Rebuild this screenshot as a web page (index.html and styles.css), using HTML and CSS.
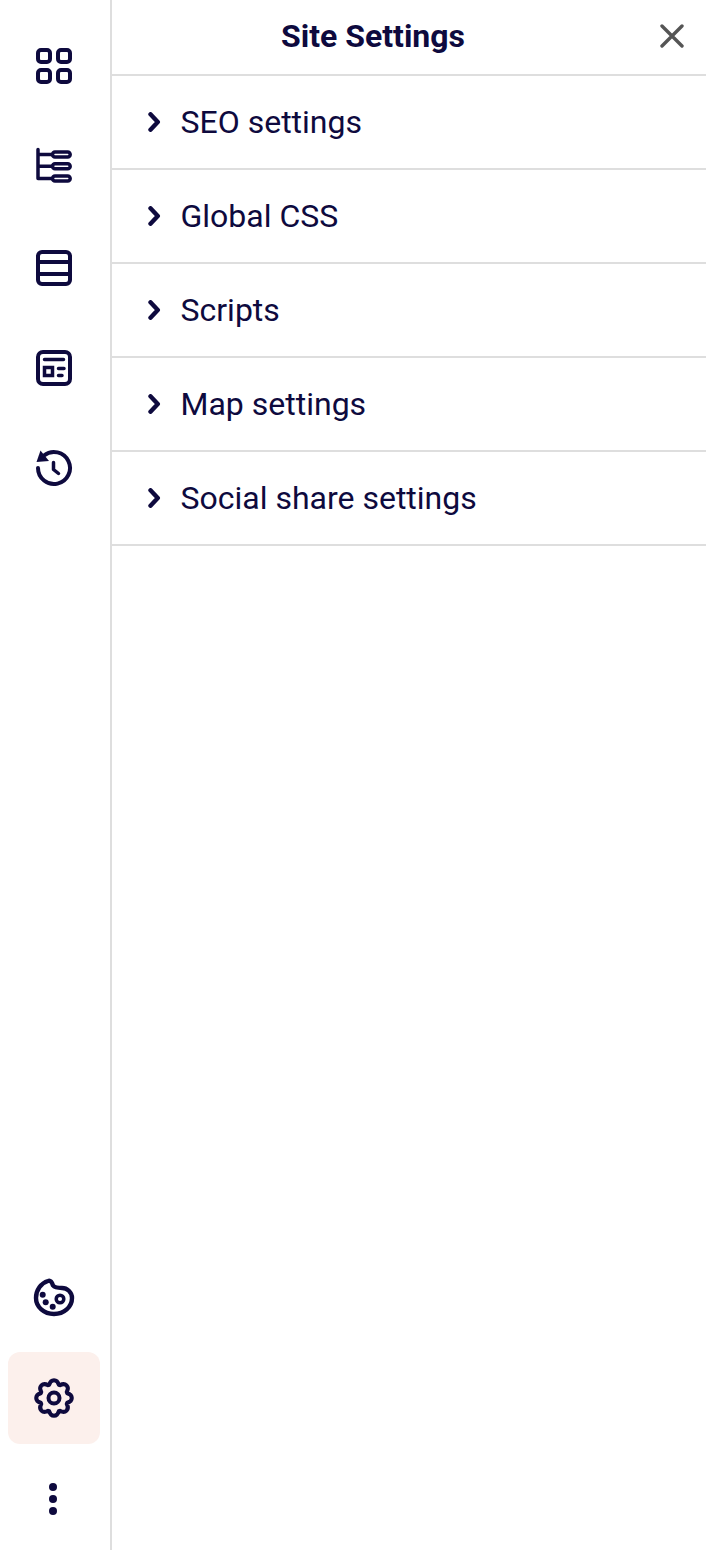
FILE: index.html
```html
<!DOCTYPE html>
<html lang="en">
<head>
<meta charset="utf-8">
<title>Site Settings</title>
<link rel="stylesheet" href="styles.css">
</head>
<body>
<div class="app">
  <nav class="rail">
    <div class="rail-group">
      <button class="rail-btn" aria-label="Elements">
        <svg class="icon" viewBox="0 0 36 36"><rect x="2" y="2" width="12" height="12" rx="3"/><rect x="22" y="2" width="12" height="12" rx="3"/><rect x="2" y="22" width="12" height="12" rx="3"/><rect x="22" y="22" width="12" height="12" rx="3"/></svg>
      </button>
      <button class="rail-btn" aria-label="Tree">
        <svg class="icon" viewBox="0 0 36 36"><path class="mid" d="M2 1.500v29h14M2 6.500h14M2 18.200h14"/><rect class="mid" x="16.500" y="4" width="17.700" height="5" rx="2.500"/><rect class="mid" x="16.500" y="15.700" width="17.700" height="5" rx="2.500"/><rect class="mid" x="16.500" y="28" width="17.700" height="5" rx="2.500"/></svg>
      </button>
      <button class="rail-btn shift" aria-label="Sections">
        <svg class="icon" viewBox="0 0 36 36"><rect x="2" y="2" width="32" height="32" rx="4"/><path d="M2 12h32M2 24h32"/></svg>
      </button>
      <button class="rail-btn" aria-label="Pages">
        <svg class="icon" viewBox="0 0 36 36"><rect x="2" y="2" width="32" height="32" rx="5"/><path class="mid" d="M8.500 9.500h19M22.500 18.500h5.500M22.500 25.500h3.500"/><rect class="thin" x="8.500" y="17.500" width="8" height="8"/></svg>
      </button>
      <button class="rail-btn" aria-label="History">
        <svg class="icon" viewBox="0 0 36 36"><path d="M8 5.500a16 16 0 1 1-6 12.500"/><path class="solid" d="M4.500 .5L.5 12l12.500-1z"/><path class="mid" d="M17.500 12.500v7l5 4"/></svg>
      </button>
    </div>
    <div class="rail-group">
      <button class="rail-btn" aria-label="Theme">
        <svg class="icon icon-lg" viewBox="0 0 40 40"><path class="heavy" d="M14 3C7 5 2 12 2 20c0 9 8 16 18 16s18-7 18-16c0-6-5-10-10-10-4 0-7 0-9-2.500C18 4.500 17 2 14 3z"/><circle class="mid" cx="26" cy="21" r="3.800"/><circle class="solid" cx="8.700" cy="16.700" r="3"/><circle class="solid" cx="11.700" cy="24.300" r="3"/><circle class="solid" cx="18.700" cy="28.700" r="3"/></svg>
      </button>
      <button class="rail-btn active" aria-label="Settings">
        <svg class="icon icon-lg" viewBox="0 0 40 40"><path d="M15.200 6.800Q16.400 2.200 20 2.200T24.800 6.800L25.940 7.270Q30.040 4.870 32.590 7.410T32.730 14.060L33.200 15.200Q37.800 16.400 37.800 20T33.200 24.800L32.730 25.940Q35.130 30.040 32.590 32.590T25.940 32.730L24.800 33.200Q23.600 37.800 20 37.800T15.200 33.200L14.060 32.730Q9.960 35.130 7.410 32.590T7.270 25.940L6.800 24.800Q2.200 23.600 2.200 20T6.800 15.200L7.270 14.060Q4.870 9.960 7.410 7.410T14.060 7.270z"/><circle cx="20" cy="20" r="5.500"/></svg>
      </button>
      <button class="rail-btn more" aria-label="More">
        <span class="dot"></span><span class="dot"></span><span class="dot"></span>
      </button>
    </div>
  </nav>
  <main class="panel">
    <header class="panel-head">
      <h1 class="panel-title">Site Settings</h1>
      <button class="close" aria-label="Close">
        <svg viewBox="0 0 24 24" class="close-icon"><path d="M2 2l20 20M22 2L2 22"/></svg>
      </button>
    </header>
    <div class="row"><svg class="chev" viewBox="0 0 14 20"><path d="M3.500 2.300L10.800 10 3.500 17.700"/></svg><span>SEO settings</span></div>
    <div class="row"><svg class="chev" viewBox="0 0 14 20"><path d="M3.500 2.300L10.800 10 3.500 17.700"/></svg><span>Global CSS</span></div>
    <div class="row"><svg class="chev" viewBox="0 0 14 20"><path d="M3.500 2.300L10.800 10 3.500 17.700"/></svg><span>Scripts</span></div>
    <div class="row"><svg class="chev" viewBox="0 0 14 20"><path d="M3.500 2.300L10.800 10 3.500 17.700"/></svg><span>Map settings</span></div>
    <div class="row"><svg class="chev" viewBox="0 0 14 20"><path d="M3.500 2.300L10.800 10 3.500 17.700"/></svg><span>Social share settings</span></div>
  </main>
</div>
</body>
</html>
```
FILE: styles.css
```css
* { box-sizing: border-box; }
html, body { margin: 0; height: 100%; background: #fff; }
body { font-family: Roboto, "Liberation Sans", sans-serif; color: #0e0a3e; }
.app { display: flex; height: 1550px; overflow: hidden; }
.rail {
  width: 112px;
  flex: none;
  border-right: 2px solid #dedede;
  padding: 20px 10px 6px 8px;
  display: flex;
  flex-direction: column;
  justify-content: space-between;
}
.rail-group { display: flex; flex-direction: column; gap: 8px; }
.rail-btn {
  width: 92px;
  height: 92px;
  border: 0;
  padding: 0;
  background: none;
  border-radius: 12px;
  display: flex;
  align-items: center;
  justify-content: center;
}
.rail-btn.shift { margin-top: 2px; }
.rail-btn.active { background: #fcf0ec; }
.icon {
  width: 36px;
  height: 36px;
  fill: none;
  stroke: #0e0a3e;
  stroke-width: 4;
  stroke-linecap: round;
  stroke-linejoin: round;
  overflow: visible;
}
.icon-lg { width: 40px; height: 40px; }
.icon .solid { fill: #0e0a3e; stroke: none; }
.icon .mid { stroke-width: 3.500; }
.icon .heavy { stroke-width: 4.400; }
.icon .thin { stroke-width: 3.500; stroke-linecap: butt; stroke-linejoin: miter; }
.more { flex-direction: column; gap: 4px; padding: 2px 2px 0 0; }
.dot { width: 8px; height: 8px; border-radius: 50%; background: #0e0a3e; }
.panel { flex: 1; min-width: 0; }
.panel-head {
  height: 76px;
  border-bottom: 2px solid #dedede;
  display: flex;
  align-items: center;
  padding-bottom: 2px;
}
.panel-title { flex: 1; margin: 0; font-size: 32px; font-weight: 700; line-height: 40px; text-align: center; }
.close {
  width: 72px;
  flex: none;
  border: 0;
  padding: 0 0 0 4px;
  background: none;
  display: flex;
  justify-content: center;
}
.close-icon { display: block; width: 24px; height: 24px; fill: none; stroke: #555; stroke-width: 3.400; stroke-linecap: round; }
.row {
  height: 94px;
  border-bottom: 2px solid #dedede;
  display: flex;
  align-items: center;
  padding-left: 35px;
  font-size: 32px;
  line-height: 40px;
}
.chev {
  width: 14px;
  height: 20px;
  margin-right: 19.500px;
  fill: none;
  stroke: #0e0a3e;
  stroke-width: 4.400;
  stroke-linecap: round;
  stroke-linejoin: round;
  flex: none;
}
```
